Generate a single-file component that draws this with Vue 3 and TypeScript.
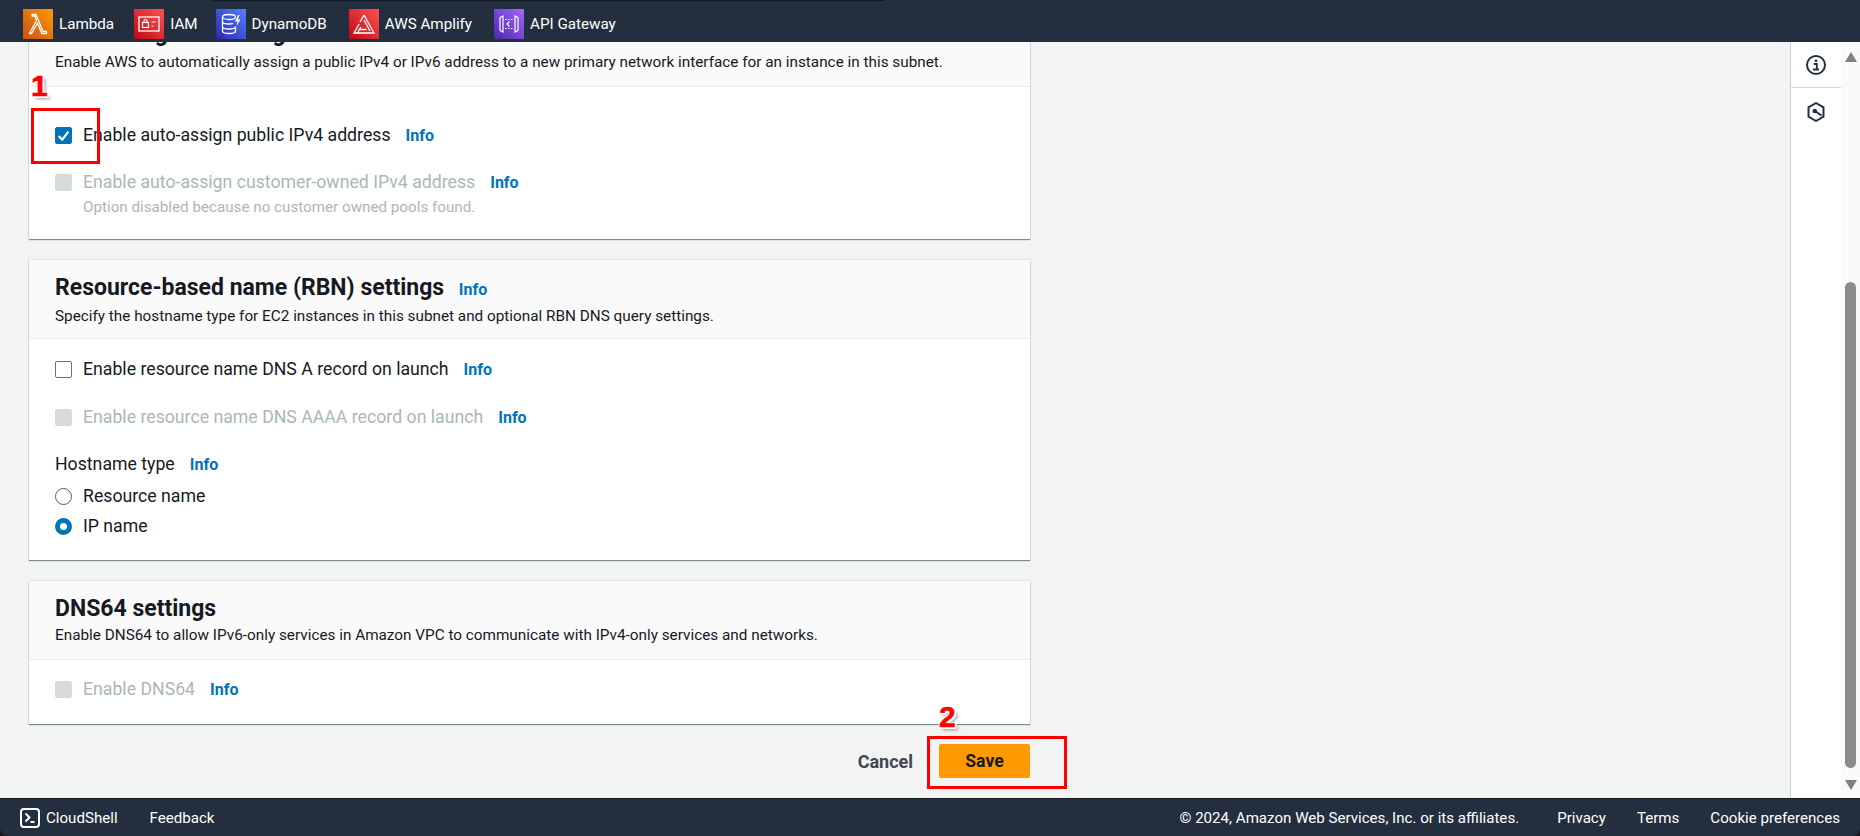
<script setup lang="ts">
const footerLinks: string[] = ['Privacy', 'Terms', 'Cookie preferences'];
</script>

<template>
  <div class="console">
    <header class="topbar">
      <div class="topbar-line"></div>
      <a class="fav">
        <svg class="fav-icon" viewBox="0 0 30 30">
          <defs>
            <linearGradient id="g-orange" x1="0" y1="1" x2="1" y2="0">
              <stop offset="0" stop-color="#c8511b" /><stop offset="1" stop-color="#ff9900" />
            </linearGradient>
          </defs>
          <rect width="30" height="30" fill="url(#g-orange)" />
          <path d="M6.500 24.500 13.500 11.500 11.800 7H9V5.500h4l7 17h3.500V24.500h-4.700L14.500 14 8.600 24.500Z" fill="none" stroke="#fff" stroke-width="1.300" stroke-linejoin="round" />
        </svg>
        <span>Lambda</span>
      </a>
      <a class="fav fav-iam">
        <svg class="fav-icon" viewBox="0 0 30 30">
          <defs>
            <linearGradient id="g-red" x1="0" y1="1" x2="1" y2="0">
              <stop offset="0" stop-color="#bd0816" /><stop offset="1" stop-color="#ff5252" />
            </linearGradient>
          </defs>
          <rect width="30" height="30" fill="url(#g-red)" />
          <rect x="5" y="8" width="20" height="14" fill="none" stroke="#fff" stroke-width="1.300" />
          <rect x="8.500" y="13.500" width="6" height="5" fill="none" stroke="#fff" stroke-width="1.200" />
          <path d="M10 13.500v-1.500a1.500 1.500 0 0 1 3 0v1.500M17.500 13h4M17.500 17h2" fill="none" stroke="#fff" stroke-width="1.200" />
        </svg>
        <span>IAM</span>
      </a>
      <a class="fav fav-dynamo">
        <svg class="fav-icon" viewBox="0 0 30 30">
          <defs>
            <linearGradient id="g-blue" x1="0" y1="1" x2="1" y2="0">
              <stop offset="0" stop-color="#2e27ad" /><stop offset="1" stop-color="#527fff" />
            </linearGradient>
          </defs>
          <rect width="30" height="30" fill="url(#g-blue)" />
          <g fill="none" stroke="#fff" stroke-width="1.300">
            <ellipse cx="13" cy="8" rx="6.500" ry="2.500" />
            <path d="M6.500 8v14c0 1.500 3 2.500 6.500 2.500s6.500-1 6.500-2.500v-3M6.500 12.500c0 1.500 3 2.500 6.500 2.500 1.500 0 3-.2 4-.6M6.500 17.500c0 1.500 3 2.500 6.500 2.500s6.500-1 6.500-2.500" />
          </g>
          <path d="M22 6l-3 6.500h2.500l-1 4.500 4-6.500h-2.500l1.500-4.500Z" fill="#fff" />
        </svg>
        <span>DynamoDB</span>
      </a>
      <a class="fav fav-amplify">
        <svg class="fav-icon" viewBox="0 0 30 30">
          <rect width="30" height="30" fill="url(#g-red)" />
          <path d="M15 6 25 24H5l5.200-9M15 6l-4 7M15 11l6 11M9.500 20.500h8M8.500 24l3.500-6" fill="none" stroke="#fff" stroke-width="1.300" />
        </svg>
        <span>AWS Amplify</span>
      </a>
      <a class="fav">
        <svg class="fav-icon" viewBox="0 0 30 30">
          <defs>
            <linearGradient id="g-purple" x1="0" y1="1" x2="1" y2="0">
              <stop offset="0" stop-color="#4d27a8" /><stop offset="1" stop-color="#a166ff" />
            </linearGradient>
          </defs>
          <rect width="30" height="30" fill="url(#g-purple)" />
          <g fill="none" stroke="#fff" stroke-width="1.200">
            <path d="M9 7 6 8.500v13L9 23Z" />
            <path d="M21 7l3 1.500v13L21 23Z" />
            <path d="M15.500 12.500 13 15l2.500 2.500" />
            <path d="M11 10.500h8M11 19.500h8" stroke-dasharray="1.500 1.500" />
          </g>
        </svg>
        <span>API Gateway</span>
      </a>
    </header>

    <div class="middle">
      <main class="content">
        <div class="pages">
          <section class="card card-first">
            <div class="card-head">
              <h2>Auto-assign IP settings</h2>
              <p>Enable AWS to automatically assign a public IPv4 or IPv6 address to a new primary network interface for an instance in this subnet.</p>
            </div>
            <div class="card-body body-first">
              <div class="row">
                <span class="box checked">
                  <svg viewBox="0 0 14 14"><path d="M2.500 7.500 5.800 10.800 11.500 3.500" fill="none" stroke="#fff" stroke-width="2" /></svg>
                </span>
                <span class="label">Enable auto-assign public IPv4 address</span>
                <a class="info">Info</a>
              </div>
              <div class="row row-near">
                <span class="box disabled"></span>
                <span class="label muted">Enable auto-assign customer-owned IPv4 address</span>
                <a class="info">Info</a>
              </div>
              <div class="note">Option disabled because no customer owned pools found.</div>
            </div>
          </section>

          <section class="card card-rbn">
            <div class="card-head">
              <h2>Resource-based name (RBN) settings <a class="info">Info</a></h2>
              <p>Specify the hostname type for EC2 instances in this subnet and optional RBN DNS query settings.</p>
            </div>
            <div class="card-body body-rbn">
              <div class="row">
                <span class="box"></span>
                <span class="label">Enable resource name DNS A record on launch</span>
                <a class="info">Info</a>
              </div>
              <div class="row row-gap">
                <span class="box disabled"></span>
                <span class="label muted">Enable resource name DNS AAAA record on launch</span>
                <a class="info">Info</a>
              </div>
              <div class="row hostname">
                <span class="label">Hostname type</span>
                <a class="info">Info</a>
              </div>
              <div class="row radio-first">
                <span class="radio"></span>
                <span class="label">Resource name</span>
              </div>
              <div class="row radio-second">
                <span class="radio on"></span>
                <span class="label">IP name</span>
              </div>
            </div>
          </section>

          <section class="card card-dns">
            <div class="card-head">
              <h2>DNS64 settings</h2>
              <p>Enable DNS64 to allow IPv6-only services in Amazon VPC to communicate with IPv4-only services and networks.</p>
            </div>
            <div class="card-body">
              <div class="row">
                <span class="box disabled"></span>
                <span class="label muted">Enable DNS64</span>
                <a class="info">Info</a>
              </div>
            </div>
          </section>

          <div class="actions">
            <a class="cancel">Cancel</a>
            <button class="save">Save</button>
          </div>
        </div>

        <div class="mark mark-one"></div>
        <div class="step step-one">1</div>
        <div class="mark mark-two"></div>
        <div class="step step-two">2</div>
      </main>

      <aside class="rail">
        <div class="rail-item">
          <svg width="22" height="22" viewBox="0 0 22 22">
            <circle cx="11" cy="11" r="9" fill="none" stroke="#232f3e" stroke-width="2" />
            <circle cx="11" cy="6.800" r="1.400" fill="#232f3e" />
            <path d="M8.800 10h3v5M8 15.500h6" fill="none" stroke="#232f3e" stroke-width="1.800" />
          </svg>
        </div>
        <div class="rail-item second">
          <svg width="20" height="22" viewBox="0 0 20 22">
            <path d="M10 2 17.500 6.300v9.400L10 20 2.500 15.700V6.300Z" fill="none" stroke="#232f3e" stroke-width="2" stroke-linejoin="round" />
            <circle cx="8.800" cy="10" r="2.300" fill="#232f3e" />
            <path d="M9 10 15.500 14.500" stroke="#232f3e" stroke-width="2" />
          </svg>
        </div>
      </aside>

      <div class="scrollbar">
        <span class="arrow up"></span>
        <div class="track"><div class="thumb"></div></div>
        <span class="arrow down"></span>
      </div>
    </div>

    <footer class="footer">
      <a class="shell">
        <svg width="20" height="20" viewBox="0 0 20 20">
          <rect x="1" y="1" width="18" height="18" rx="3" fill="none" stroke="#fff" stroke-width="2" />
          <path d="M5.500 5.500 9.500 9.500 5.500 13.500" fill="none" stroke="#fff" stroke-width="2" />
          <path d="M10.500 14h4" stroke="#fff" stroke-width="2" />
        </svg>
        <span>CloudShell</span>
      </a>
      <a class="feedback">Feedback</a>
      <span class="copyright">© 2024, Amazon Web Services, Inc. or its affiliates.</span>
      <a v-for="link in footerLinks" :key="link" class="foot-link">{{ link }}</a>
    </footer>
  </div>
</template>

<style scoped>
.console {
  width: 1860px;
  height: 836px;
  display: flex;
  flex-direction: column;
  overflow: hidden;
  background: #16191f;
  font-family: Roboto, "Noto Sans", sans-serif;
  color: #16191f;
}

.topbar {
  position: relative;
  height: 42px;
  flex: none;
  display: flex;
  align-items: center;
  padding-left: 23px;
  padding-top: 6px;
  box-sizing: border-box;
  background: #232f3e;
}

.topbar-line {
  position: absolute;
  top: 0;
  left: 212px;
  width: 673px;
  height: 1px;
  background: #0f1b2a;
}

.fav {
  display: flex;
  align-items: center;
  gap: 6px;
  margin-right: 20px;
  color: #fff;
  font-size: 15.2px;
  font-weight: 400;
}

.fav-iam { margin-right: 18px; }
.fav-dynamo { margin-right: 22px; }
.fav-amplify { margin-right: 22px; }

.fav-icon {
  width: 30px;
  height: 30px;
}

.middle {
  flex: 1;
  min-height: 0;
  display: flex;
}

.content {
  position: relative;
  flex: 1;
  overflow: hidden;
  background: #f2f3f3;
}

.pages {
  width: 1001px;
  margin: -34px 0 0 29px;
  display: flex;
  flex-direction: column;
  gap: 21px;
}

.card {
  background: #fff;
  box-shadow: 0 1px 1px 0 rgba(0, 28, 36, 0.45), 0 0 1px 0 rgba(0, 28, 36, 0.3);
}

.card-first { height: 231px; }
.card-rbn { height: 300px; }
.card-dns { height: 143px; }

.card-head {
  height: 79px;
  box-sizing: border-box;
  padding: 14px 26px 0;
  background: #fafafa;
  border-bottom: 1px solid #eaeded;
}

.card-head h2 {
  margin: 0;
  font-size: 23px;
  line-height: 27px;
  font-weight: 700;
}

/* only the tails of this heading show under the top bar */
.card-first .card-head h2 {
  margin-top: -2px;
}

.card-first .card-head p {
  margin-top: 5px;
}

.card-head h2 .info {
  margin-left: 9px;
}

.card-head p {
  margin: 3px 0 0;
  font-size: 15.3px;
  line-height: 20px;
  color: #16191f;
}

.card-body {
  padding: 17px 26px 0;
}

.body-first {
  padding-top: 36px;
}

.body-rbn {
  padding-top: 18px;
}

.row {
  height: 24px;
  display: flex;
  align-items: center;
}

.row-gap { margin-top: 24px; }
.row-near { margin-top: 23px; }
.hostname { margin-top: 23px; }
.radio-first { margin-top: 8px; }
.radio-second { margin-top: 6px; }

.box {
  width: 17px;
  height: 17px;
  flex: none;
  box-sizing: border-box;
  margin-right: 11px;
  border: 1px solid #687078;
  border-radius: 2px;
  background: #fff;
}

.box svg {
  display: block;
  width: 15px;
  height: 15px;
}

.box.checked {
  background: #0073bb;
  border-color: #0073bb;
}

.box.disabled {
  background: #d5dbdb;
  border-color: #d5dbdb;
}

.radio {
  width: 17px;
  height: 17px;
  flex: none;
  box-sizing: border-box;
  margin-right: 11px;
  border: 1px solid #545b64;
  border-radius: 50%;
  background: #fff;
}

.radio.on {
  border: 5px solid #0073bb;
}

.label {
  font-size: 17.7px;
  line-height: 24px;
  color: #16191f;
}

.label.muted {
  color: #aab7b8;
}

.info {
  margin-left: 15px;
  font-size: 16px;
  font-weight: 700;
  color: #0073bb;
}

.note {
  margin-top: 3px;
  margin-left: 28px;
  font-size: 15.2px;
  line-height: 20px;
  color: #aab7b8;
}

.actions {
  display: flex;
  justify-content: flex-end;
  align-items: center;
  gap: 26px;
  margin-top: -1px;
}

.cancel {
  font-size: 18px;
  font-weight: 700;
  color: #414750;
}

.save {
  width: 91px;
  height: 34px;
  border: 0;
  border-radius: 2px;
  background: #ff9900;
  font-family: inherit;
  font-size: 17.6px;
  font-weight: 700;
  color: #16191f;
}

.mark {
  position: absolute;
  box-sizing: border-box;
  border: 3px solid #f00;
}

.mark-one {
  left: 31px;
  top: 66px;
  width: 69px;
  height: 56px;
}

.mark-two {
  left: 927px;
  top: 694px;
  width: 140px;
  height: 53px;
}

.step {
  position: absolute;
  font-family: "Liberation Sans", Arial, sans-serif;
  font-size: 30px;
  line-height: 30px;
  font-weight: 700;
  color: #f00;
  -webkit-text-stroke: 0.6px #f00;
  text-shadow: 1px 1px 0 #fff, -1px -1px 0 #fff, 1px -1px 0 #fff, -1px 1px 0 #fff, 2px 0 0 #fff, 0 2px 0 #fff, 2px 2px 1px #fff, 3px 3px 3px rgba(0, 0, 0, 0.45);
}

.step-one {
  left: 31px;
  top: 29px;
}

.step-two {
  left: 939px;
  top: 660px;
}

.rail {
  width: 50px;
  flex: none;
  background: #fff;
  border-left: 1px solid #c8cccc;
}

.rail-item {
  height: 45px;
  display: flex;
  align-items: center;
  justify-content: center;
  border-bottom: 1px solid #d5dbdb;
}

.rail-item.second {
  border-bottom: 0;
  height: 48px;
}

.scrollbar {
  width: 19px;
  flex: none;
  background: #fafafa;
  display: flex;
  flex-direction: column;
  align-items: center;
}

.track {
  flex: 1;
  width: 11px;
}

.thumb {
  width: 11px;
  height: 486px;
  margin-top: 220px;
  border-radius: 6px;
  background: #8b8b8b;
}

.arrow {
  width: 0;
  height: 0;
  flex: none;
  border-left: 6px solid transparent;
  border-right: 6px solid transparent;
}

.arrow.up {
  margin-top: 10px;
  border-bottom: 10px solid #808080;
}

.arrow.down {
  margin-bottom: 8px;
  border-top: 10px solid #808080;
}

.footer {
  height: 38px;
  flex: none;
  box-sizing: border-box;
  display: flex;
  align-items: center;
  padding: 0 20px;
  background: #232f3e;
  border-top: 1px solid #16191f;
  border-radius: 0 0 8px 8px;
  color: #fff;
  font-size: 15.1px;
}

.shell {
  display: flex;
  align-items: center;
  gap: 6px;
}

.feedback {
  margin-left: 32px;
}

.copyright {
  margin-left: auto;
  margin-right: 38px;
}

.foot-link {
  margin-right: 31px;
}

.foot-link:last-child {
  margin-right: 0;
}
</style>

<style>
html,
body {
  margin: 0;
  background: #16191f;
}
</style>
